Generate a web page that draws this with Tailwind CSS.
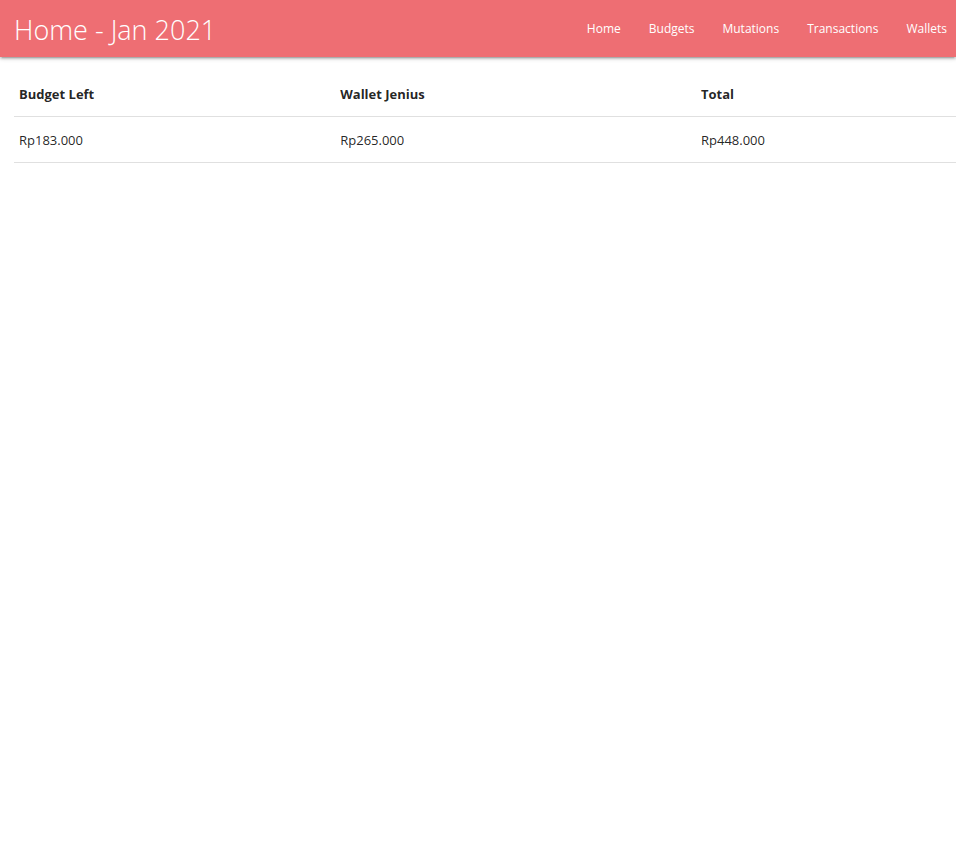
<!DOCTYPE html>
<html lang="en">
<head>
<meta charset="utf-8">
<meta name="viewport" content="width=device-width, initial-scale=1">
<title>Home - Jan 2021</title>
<script src="https://cdn.jsdelivr.net/npm/@tailwindcss/browser@4"></script>
</head>
<body class="bg-white font-['Open_Sans',sans-serif] text-[13px] text-black/87 overflow-x-hidden">
<header class="bg-[#ee6e73] text-white shadow-[0_2px_2px_0_rgba(0,0,0,0.14),0_3px_1px_-2px_rgba(0,0,0,0.12),0_1px_5px_0_rgba(0,0,0,0.2)]">
<nav class="flex h-[57px] items-center justify-between pl-3.5 pr-[9px]">
<a href="#" class="pt-0.5 text-[27px] leading-10 font-light whitespace-nowrap">Home - Jan 2021</a>
<ul class="flex gap-7 text-xs">
<li><a href="#" class="block leading-[57px]">Home</a></li>
<li><a href="#" class="block leading-[57px]">Budgets</a></li>
<li><a href="#" class="block leading-[57px]">Mutations</a></li>
<li><a href="#" class="block leading-[57px]">Transactions</a></li>
<li><a href="#" class="block leading-[57px]">Wallets</a></li>
</ul>
</nav>
</header>
<main class="pl-3.5 pt-3.5">
<table class="w-full table-fixed border-collapse text-left">
<colgroup><col class="w-[34.1%]"><col class="w-[38.3%]"><col></colgroup>
<thead><tr class="border-b border-black/12"><th class="px-[5px] pt-[15px] pb-[13px] font-bold leading-[17px]">Budget Left</th><th class="px-[5px] pt-[15px] pb-[13px] font-bold leading-[17px]">Wallet Jenius</th><th class="px-[5px] pt-[15px] pb-[13px] font-bold leading-[17px]">Total</th></tr></thead>
<tbody><tr class="border-b border-black/12"><td class="px-[5px] pt-[15px] pb-[13px] leading-[17px]">Rp183.000</td><td class="px-[5px] pt-[15px] pb-[13px] leading-[17px]">Rp265.000</td><td class="px-[5px] pt-[15px] pb-[13px] leading-[17px]">Rp448.000</td></tr></tbody>
</table>
</main>
</body>
</html>
